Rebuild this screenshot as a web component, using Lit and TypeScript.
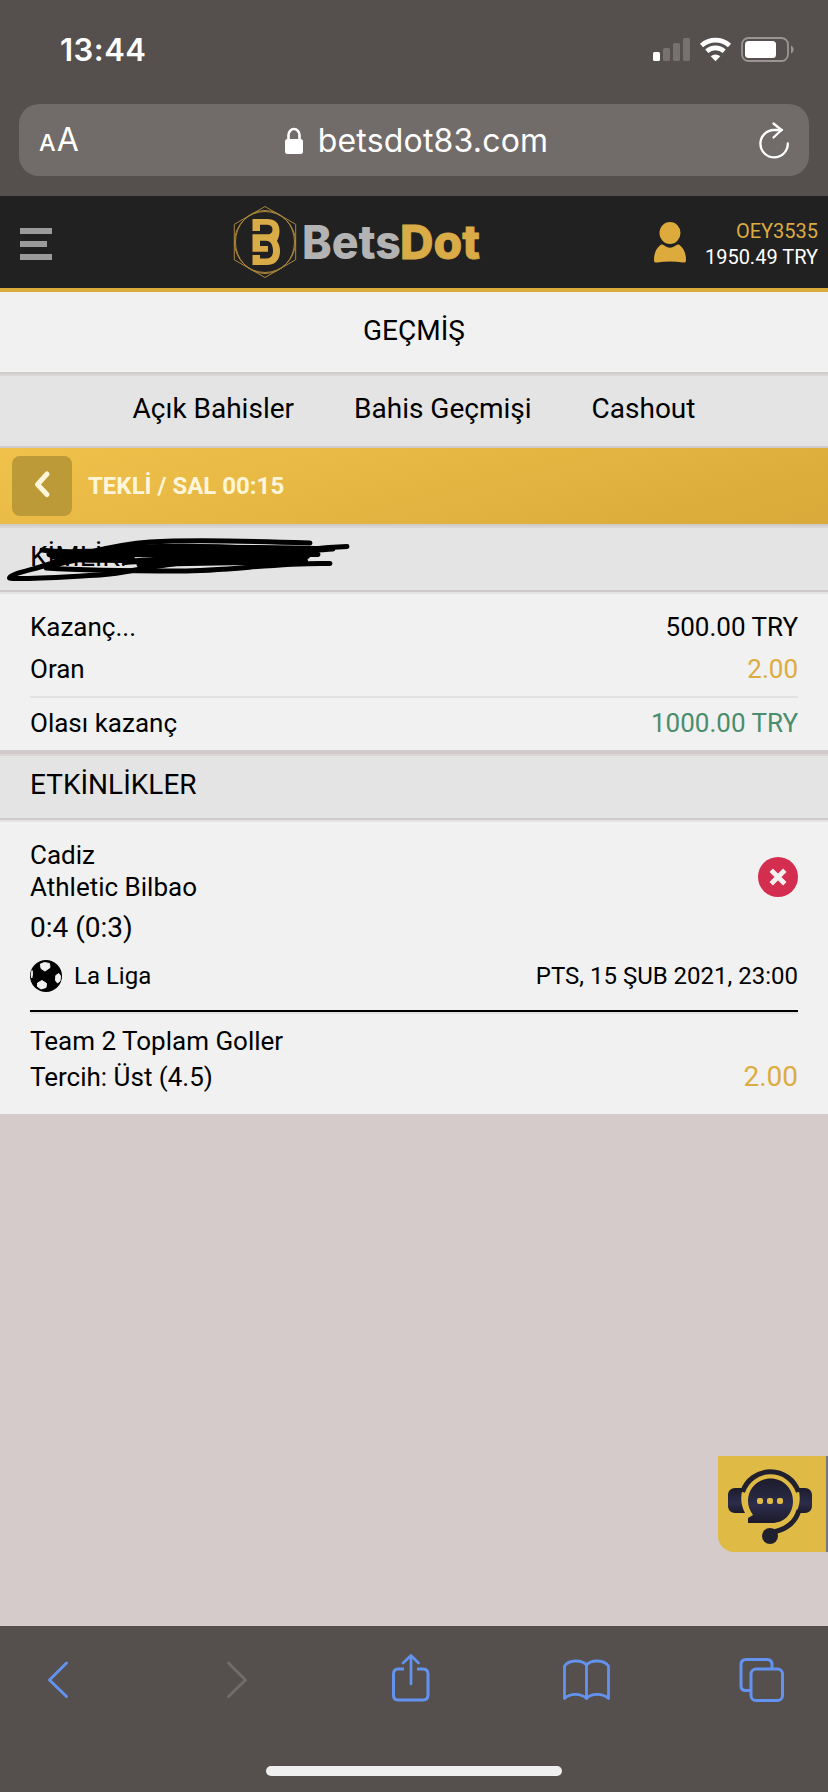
import { LitElement, html, css, svg } from "lit";
import { customElement } from "lit/decorators.js";

const hexPoints = (r: number, turn = 0) =>
  Array.from({ length: 6 }, (_, i) => {
    const a = (Math.PI / 3) * i - Math.PI / 2 + turn;
    return `${(32 + r * Math.cos(a)).toFixed(1)},${(36 + r * Math.sin(a)).toFixed(1)}`;
  }).join(" ");

@customElement("app-root")
export class AppRoot extends LitElement {
  static styles = css`
    :host { display: block; width: 828px; height: 1792px; overflow: hidden; background: #d5cbca; color: #000; font-family: Roboto, sans-serif; }
    * { box-sizing: border-box; }
    svg { display: block; flex: none; overflow: visible; }
    .page { display: flex; flex-direction: column; height: 1792px; position: relative; }
    .chrome { background: #554f4e; height: 196px; color: #fff; font-family: Inter, sans-serif; flex: none; }
    .status { height: 104px; display: flex; justify-content: space-between; padding: 31px 34px 0 60px; }
    .time { font-size: 31px; font-weight: 600; line-height: 38px; letter-spacing: 0.5px; }
    .url { margin: 0 19px; height: 72px; border-radius: 20px; background: #716b6a; display: flex; align-items: center; justify-content: space-between; padding: 0 19px 0 20px; }
    .aa { display: flex; align-items: baseline; width: 80px; font-size: 32px; line-height: 40px; padding-top: 3px; gap: 1px; }
    .small { font-size: 23.5px; font-weight: 500; }
    .host { display: flex; align-items: center; gap: 14px; font-size: 32px; line-height: 40px; letter-spacing: 0.2px; padding: 2px 0 0 3px; }
    .reload { width: 80px; display: flex; justify-content: flex-end; }
    .header { height: 96px; flex: none; background: #212121; border-bottom: 4px solid #dcab3c; display: grid; grid-template-columns: 233px 248px 1fr; align-items: center; padding: 0 10px 0 0; }
    .burger { margin-left: 20px; display: flex; flex-direction: column; gap: 7px; padding-top: 4px; }
    .burger i { display: block; width: 32px; height: 6px; background: #9b9b9b; }
    .burger i:nth-child(2) { width: 27px; }
    .word { font: 800 47px Inter, sans-serif; }
    .user { display: flex; justify-content: flex-end; align-items: center; gap: 19px; }
    .acct { text-align: right; font-size: 20px; line-height: 26px; color: #fff; padding-top: 4px; white-space: nowrap; }
    .gold { color: #dbac40; }
    .title, .tabs, .cap { font-size: 28px; display: flex; align-items: center; flex: none; }
    .title { height: 82px; background: #f1f1f1; justify-content: center; padding-bottom: 4px; border-bottom: 2px solid #d0cacb; }
    .tabs { height: 74px; background: #e4e4e4; justify-content: center; gap: 60px; padding-bottom: 6px; border-top: 2px solid #dad6d6; border-bottom: 2px solid #d0cbcb; }
    .bet { height: 78px; flex: none; background: linear-gradient(165deg, #f0c24b, #d9a939) padding-box; border-bottom: 2px solid #d0cbc9; display: flex; align-items: center; gap: 16px; padding-left: 12px; color: #fff6da; font-weight: 700; font-size: 24px; }
    .back { width: 60px; height: 60px; border-radius: 8px; background: #bd9a38; display: flex; align-items: center; justify-content: center; }
    .cap { height: 66px; background: #e4e4e4; padding: 0 30px 5px; border-top: 2px solid #dad6d6; border-bottom: 2px solid #d1c9c9; position: relative; }
    .ink { position: absolute; left: 0; top: 0; }
    .panel { background: #f1f1f1; padding: 0 30px; flex: none; border-top: 2px solid #e5e3e3; font-size: 26px; }
    .info { height: 162px; padding-top: 12px; border-bottom: 4px solid #d2caca; }
    .row { display: flex; justify-content: space-between; line-height: 42px; }
    .sum { margin-top: 6px; border-top: 2px solid #e2e2e2; line-height: 50px; }
    .green { color: #4a8d6d; }
    .match { height: 294px; padding-top: 17px; }
    .teams { display: flex; justify-content: space-between; align-items: flex-start; line-height: 32px; }
    .lost { margin-top: 18px; }
    .score { font-size: 28px; line-height: 36px; margin-top: 7px; }
    .league { display: flex; justify-content: space-between; align-items: center; font-size: 24px; height: 66px; padding-bottom: 4px; border-bottom: 2px solid #000; box-shadow: 0 2px #e3e3e3; }
    .liga { display: flex; align-items: center; gap: 12px; }
    .market { line-height: 36px; padding-top: 11px; }
    .pickrow { display: flex; justify-content: space-between; }
    .odd { font-size: 28px; }
    .chat { position: absolute; right: 0; top: 1456px; width: 110px; height: 96px; background: #dfba45; border-right: 2px solid #777; border-bottom-left-radius: 16px; }
    .dock { margin-top: auto; height: 166px; background: #554f4e; flex: none; }
  `;

  private logo() {
    return svg`
      <svg width="248" height="72" viewBox="0 0 248 72">
        <g fill="none" stroke="#a98639" stroke-width="1">
          <polygon points=${hexPoints(35.5)} />
          <circle cx="32" cy="36" r="30.5" />
          <ellipse cx="32" cy="36" rx="29.5" ry="31.5" />
        </g>
        <path fill="#d9ac47" d="M19.500 13H34C42 13 46.500 17 46.500 25C46.500 29 45.500 32 44 35C46 38 47 41 47 45C47 54 42 59 34 59H19.500V49H27V52.500H33C38 52.500 40 49.500 40 45C40 38.500 37.500 34.700 33 34.700H27V40H35V45.700H19.500V28.300H36C38.500 27.500 39.500 26 39.500 23.500C39.500 20 37 18.700 33 18.700H27V25H19.500Z" />
        <text class="word" x="69" y="53" fill="#b3b3b3" textLength="99" lengthAdjust="spacingAndGlyphs">Bets</text>
        <text class="word" x="167" y="53" fill="#d9ac47" stroke="#d9ac47" stroke-width=".8" textLength="80" lengthAdjust="spacingAndGlyphs">Dot</text>
      </svg>`;
  }

  render() {
    return html`
      <div class="page">
        <div class="chrome">
          <div class="status">
            <div class="time">13:44</div>
            <svg width="142" height="38" viewBox="0 0 142 38">
              <rect x="1" y="21" width="7" height="9" rx="1.500" fill="#fff" />
              <g fill="#777170">
                <rect x="11" y="17" width="7" height="13" rx="1.500" />
                <rect x="21" y="12" width="7" height="18" rx="1.500" />
                <rect x="31" y="7" width="7" height="23" rx="1.500" />
              </g>
              <g fill="none" stroke="#fff" stroke-width="4.600">
                <path d="M49.500 14.500a21 21 0 0 1 28 0" />
                <path d="M54.800 20.200a13 13 0 0 1 17.400 0" />
              </g>
              <path d="M58.700 25.300a7 7 0 0 1 9.600 0L63.500 30.200z" fill="#fff" />
              <rect x="90" y="7" width="46" height="23" rx="6.500" fill="none" stroke="#9a9594" stroke-width="1.800" />
              <rect x="93" y="10" width="31" height="17" rx="3.500" fill="#fff" />
              <path d="M139 14.500v8c3.500-1.500 3.500-6.500 0-8z" fill="#9a9594" />
            </svg>
          </div>
          <div class="url">
            <div class="aa"><span class="small">A</span><span>A</span></div>
            <div class="host">
              <svg width="20" height="28" viewBox="0 0 20 28">
                <rect x="1" y="12" width="18" height="15" rx="2.500" fill="#fff" />
                <path d="M4.500 13V8a5.500 6 0 0 1 11 0v5" fill="none" stroke="#fff" stroke-width="2.600" />
              </svg>
              <span>betsdot83.com</span>
            </div>
            <div class="reload">
              <svg width="32" height="38" viewBox="0 0 32 38" fill="none" stroke="#fff" stroke-width="2.300" stroke-linecap="round" stroke-linejoin="round">
                <path d="M29.800 22.500A13.700 13.700 0 1 1 16 9H24" />
                <path d="M15.500 2.500l8 6.500-8 7.500" />
              </svg>
            </div>
          </div>
        </div>

        <div class="header">
          <div class="burger"><i></i><i></i><i></i></div>
          ${this.logo()}
          <div class="user">
            <svg width="32" height="42" viewBox="0 0 32 42" fill="#dcab3c">
              <ellipse cx="16" cy="12" rx="10.500" ry="11" />
              <path d="M6.500 24c1-.8 2.300-.6 3.400.3 4 3.200 8.200 3.200 12.200 0 1.100-.9 2.400-1.100 3.400-.3C30 27.500 32 32.500 32 39c0 2-1 2.800-3 2.500-8.500-1.300-17.500-1.300-26 0-2 .3-3-.5-3-2.500C0 32.500 2 27.500 6.500 24z" />
            </svg>
            <div class="acct"><div class="gold">OEY3535</div><div>1950.49 TRY</div></div>
          </div>
        </div>

        <div class="title">GEÇMİŞ</div>
        <div class="tabs"><span>Açık Bahisler</span><span>Bahis Geçmişi</span><span>Cashout</span></div>
        <div class="bet">
          <div class="back">
            <svg width="60" height="60" viewBox="0 0 60 60" fill="none" stroke="#fff6da" stroke-width="5" stroke-linecap="round" stroke-linejoin="round">
              <path d="M35 18L25.500 28.500L35 38.500" />
            </svg>
          </div>
          <span>TEKLİ / SAL 00:15</span>
        </div>
        <div class="cap">
          <span>KİMLİK:</span>
          <svg class="ink" width="360" height="62" viewBox="0 528 360 62" fill="none" stroke="#000" stroke-width="5" stroke-linecap="round" stroke-linejoin="round">
            <path d="M310 543C250 541 185 540 150 542C110 545 75 556 40 567C22 572 9 575 9.500 578C18 580 60 577 100 575C130 573 150 565 200 561C240 558 290 549 347 546.500" />
            <path d="M42 550C70 554 110 550 145 547C190 548 245 546 333 549C285 553 230 548 160 550C115 552 80 556 54 557" />
            <path d="M54 562C90 550 130 546 190 547C230 548 290 548 311 550" />
            <path d="M318 554.500C260 555 200 550 140 552C105 554 68 560 46 568C90 571 130 571 180 571C230 571 280 562 330 563.500" />
            <path d="M100 554C160 551 230 550 307 556M62 556C110 552 180 554 305 561M125 562C170 558 230 560 308 552" stroke-width="6" />
            <path d="M140 564C180 562 230 562 280 561M50 554C75 562 110 558 132 560M100 551C160 545 230 547 290 552" stroke-width="7" />
            <path d="M293 564h10v-7M283 552v11" stroke-width="4" />
          </svg>
        </div>

        <div class="panel info">
          <div class="row"><span>Kazanç...</span><span>500.00 TRY</span></div>
          <div class="row"><span>Oran</span><span class="gold">2.00</span></div>
          <div class="row sum"><span>Olası kazanç</span><span class="green">1000.00 TRY</span></div>
        </div>
        <div class="cap">ETKİNLİKLER</div>
        <div class="panel match">
          <div class="teams">
            <div><div>Cadiz</div><div>Athletic Bilbao</div></div>
            <svg class="lost" width="40" height="40" viewBox="0 0 40 40">
              <circle cx="20" cy="20" r="20" fill="#d32d4f" />
              <path d="M13.200 13.200l13.600 13.600M26.800 13.200L13.200 26.800" stroke="#f5f0f0" stroke-width="4.800" />
            </svg>
          </div>
          <div class="score">0:4 (0:3)</div>
          <div class="league">
            <div class="liga">
              <svg width="32" height="32" viewBox="0 0 32 32">
                <circle cx="16" cy="16" r="16" fill="#000" />
                <g fill="#f1f1f1" stroke="#f1f1f1" stroke-width="1" stroke-linejoin="round">
                  <path d="M10.500 4l4-1.500 5 1 .5 4-5 3.500-4-2.500z" />
                  <path d="M7.500 23l4.500-2.500 4.500 3-.5 4-5 1.500-3.500-2.500z" />
                  <path d="M25.800 15.500l3-2 1.700 2.500-.5 5-2.500 2-2-2.500z" />
                  <path d="M2 10.500l.6 3-.8 4.500-.6-2.500z" />
                </g>
              </svg>
              <span>La Liga</span>
            </div>
            <span>PTS, 15 ŞUB 2021, 23:00</span>
          </div>
          <div class="market">
            <div>Team 2 Toplam Goller</div>
            <div class="pickrow"><span>Tercih: Üst (4.5)</span><span class="gold odd">2.00</span></div>
          </div>
        </div>

        <div class="chat">
          <svg width="108" height="96" viewBox="0 0 108 96">
            <defs>
              <linearGradient id="navy" x1="0" y1="0" x2="0" y2="1">
                <stop offset="0" stop-color="#1c1c2c" /><stop offset=".6" stop-color="#2d2c4b" /><stop offset="1" stop-color="#1c1b2a" />
              </linearGradient>
            </defs>
            <path d="M24.500 36A29.500 29.500 0 0 1 80.500 36M81 54C78 66 68 74 54 76" fill="none" stroke="#20202f" stroke-width="5" />
            <path d="M25 32C22 41 23 49 27 57H17C12 57 10 53 10 50V39C10 35 13 32 17 32z" fill="url(#navy)" />
            <path d="M80 32C83 41 82 49 78 57H87C92 57 94 53 94 50V39C94 35 91 32 87 32z" fill="url(#navy)" />
            <path d="M52.500 22.500C65 22.500 75 32 75 45C75 58 66 67 54 67H30V62L35 59C32 55 30 50 30 45C30 32 40 22.500 52.500 22.500z" fill="url(#navy)" />
            <circle cx="52" cy="80" r="8" fill="#20202f" />
            <g fill="#dfba45"><rect x="39" y="42" width="6" height="6" rx="2" /><rect x="49" y="42" width="6" height="6" rx="2" /><rect x="59" y="42" width="6" height="6" rx="2" /></g>
          </svg>
        </div>

        <div class="dock">
          <svg width="828" height="166" viewBox="0 1626 828 166" fill="none" stroke="#6393ee" stroke-width="3" stroke-linecap="round" stroke-linejoin="round">
            <path d="M66.500 1663L49.500 1680L66.500 1696.500" />
            <path d="M228.500 1663L245.500 1680L228.500 1696.500" stroke="#716c6b" />
            <path d="M404 1669H398Q393.500 1669 393.500 1674V1695Q393.500 1700 398 1700H423Q428 1700 428 1695V1674Q428 1669 423 1669H417" stroke-linecap="butt" />
            <path d="M411 1684V1656M403 1663L411 1655.500L418.500 1663" stroke-width="2.700" />
            <path d="M564.500 1698.500V1666C569 1659.500 582 1659.500 586.500 1665C591 1659.500 604 1659.500 608.500 1666V1698.500C603 1693 591 1693 586.500 1698.500C581 1693 570 1693 564.500 1698.500zM586.500 1665V1698" stroke-width="2.800" />
            <rect x="751" y="1669" width="31.500" height="31.500" rx="5" />
            <path d="M750 1690.500H746Q741 1690.500 741 1686V1664.500Q741 1659.500 746 1659.500H767Q772 1659.500 772 1664.500V1668" />
            <rect x="266" y="1766" width="296" height="10" rx="5" fill="#f0efef" stroke="none" />
          </svg>
        </div>
      </div>
    `;
  }
}
